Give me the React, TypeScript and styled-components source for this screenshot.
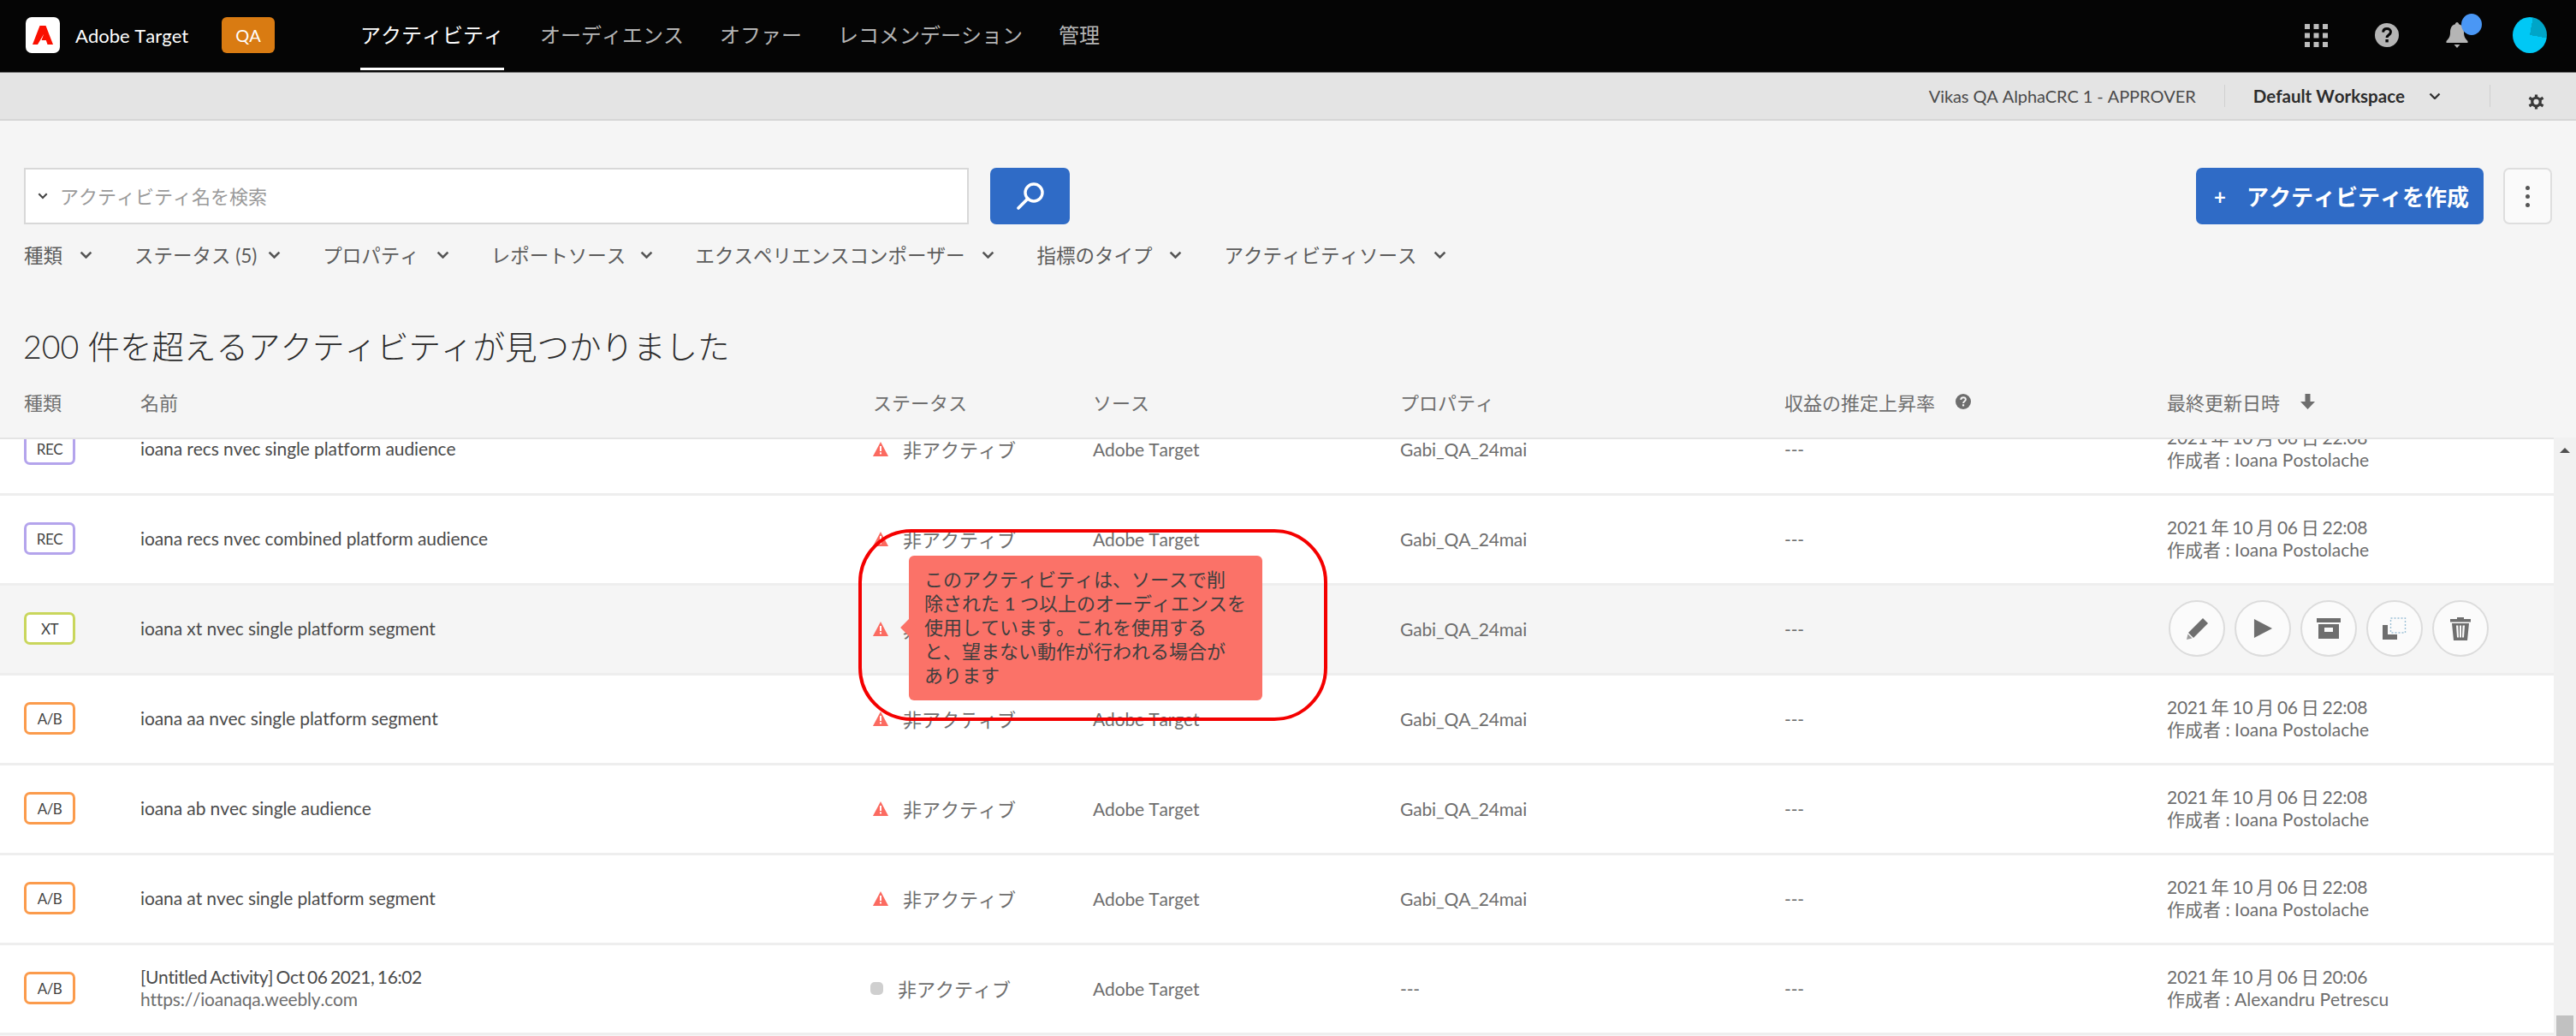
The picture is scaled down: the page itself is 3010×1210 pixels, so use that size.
import styled, { createGlobalStyle } from "styled-components";

// page basics
const GlobalStyle = createGlobalStyle`
  html, body {
    margin: 0;
    padding: 0;
    background: #f5f5f5;
  }
  body {
    font-family: Lato, "Noto Sans CJK JP", sans-serif;
    font-kerning: none;
    color: #4b4b4b;
  }
`;

const COLUMNS = "136px 856px 257px 359px 449px 447px 1fr";

const badgeColors: Record<string, string> = {
  REC: "#b4a4ec",
  XT: "#c9d65c",
  "A/B": "#fb9b4c",
};

type Activity = {
  type: string;
  name: string;
  url?: string;
  warning: boolean;
  property: string;
  updated: string;
  author: string;
  hovered?: boolean;
};

const activities: Activity[] = [
  { type: "REC", name: "ioana recs nvec single platform audience", warning: true, property: "Gabi_QA_24mai", updated: "2021 年 10 月 06 日 22:08", author: "Ioana Postolache" },
  { type: "REC", name: "ioana recs nvec combined platform audience", warning: true, property: "Gabi_QA_24mai", updated: "2021 年 10 月 06 日 22:08", author: "Ioana Postolache" },
  { type: "XT", name: "ioana xt nvec single platform segment", warning: true, property: "Gabi_QA_24mai", updated: "2021 年 10 月 06 日 22:08", author: "Ioana Postolache", hovered: true },
  { type: "A/B", name: "ioana aa nvec single platform segment", warning: true, property: "Gabi_QA_24mai", updated: "2021 年 10 月 06 日 22:08", author: "Ioana Postolache" },
  { type: "A/B", name: "ioana ab nvec single audience", warning: true, property: "Gabi_QA_24mai", updated: "2021 年 10 月 06 日 22:08", author: "Ioana Postolache" },
  { type: "A/B", name: "ioana at nvec single platform segment", warning: true, property: "Gabi_QA_24mai", updated: "2021 年 10 月 06 日 22:08", author: "Ioana Postolache" },
  { type: "A/B", name: "[Untitled Activity] Oct 06 2021, 16:02", url: "https://ioanaqa.weebly.com", warning: false, property: "---", updated: "2021 年 10 月 06 日 20:06", author: "Alexandru Petrescu" },
];

const navItems = ["アクティビティ", "オーディエンス", "オファー", "レコメンデーション", "管理"];

const filters = [
  { label: "種類", gap: 20 },
  { label: "ステータス (5)", gap: 13 },
  { label: "プロパティ", gap: 20 },
  { label: "レポートソース", gap: 17 },
  { label: "エクスペリエンスコンポーザー", gap: 20 },
  { label: "指標のタイプ", gap: 20 },
  { label: "アクティビティソース", gap: 20 },
];

// small drawings
function Chevron({ size = 14, color = "#555" }: { size?: number; color?: string }) {
  return (
    <svg width={size} height={size * 0.6} viewBox="0 0 14 8.4" fill="none">
      <path d="M1.5 1.5 7 7l5.5-5.5" stroke={color} strokeWidth="2.4" />
    </svg>
  );
}

function AdobeMark() {
  return (
    <svg width="24" height="24" viewBox="0 0 24 24">
      <path d="M8.5 1h7L24 23h-6.5l-1.7-5h-5.3l2.7-7.2L6 23H0z" fill="#fa0f00" />
    </svg>
  );
}

function GridIcon() {
  const dots = [0, 10.5, 21];
  return (
    <svg width="27" height="27" viewBox="0 0 27 27" fill="#bdbdbd">
      {dots.map((y) => dots.map((x) => <rect key={`${x}-${y}`} x={x} y={y} width="6" height="6" />))}
    </svg>
  );
}

function HelpIcon({ size, color, mark }: { size: number; color: string; mark: string }) {
  return (
    <svg width={size} height={size} viewBox="0 0 28 28">
      <circle cx="14" cy="14" r="14" fill={color} />
      <path d="M9.6 10.6c.2-2.7 2-4 4.5-4 2.6 0 4.4 1.500 4.400 3.700 0 3.500-4.400 3.300-4.400 6.700" fill="none" stroke={mark} strokeWidth="3" />
      <rect x="12.400" y="19" width="3.400" height="3.400" fill={mark} />
    </svg>
  );
}

function BellIcon() {
  return (
    <svg width="26" height="30" viewBox="0 0 26 30" fill="#b5b5b5">
      <path d="M13 0c1.300 0 2 1 2 2.200 4.500 1.200 6 5 6 9.800 0 5 2 7.500 4.500 10v2H.500v-2C3 19.500 5 17 5 12c0-4.800 1.500-8.600 6-9.800C11 1 11.700 0 13 0z" />
      <path d="M9.500 26h7L13 30z" />
    </svg>
  );
}

function GearIcon() {
  return (
    <svg width="19" height="20" viewBox="0 0 20 20" fill="none" stroke="#3a3a3a">
      <circle cx="10" cy="10" r="5" strokeWidth="3.400" />
      <path d="M10 1v4M10 15v4M1.500 5l3.500 2M15 13l3.500 2M1.500 15 5 13M15 7l3.500-2" strokeWidth="3.400" />
    </svg>
  );
}

function SearchIcon() {
  return (
    <svg width="34" height="34" viewBox="0 0 34 34" fill="none" stroke="#fff">
      <circle cx="21" cy="13" r="10" strokeWidth="3.400" />
      <path d="M14 20 3 31" strokeWidth="3.800" strokeLinecap="round" />
    </svg>
  );
}

function WarningIcon() {
  return (
    <svg width="18" height="17" viewBox="0 0 18 17">
      <path d="M9 0 18 17H0z" fill="#fb6a60" />
      <rect x="8" y="5" width="2" height="6" fill="#fff" />
      <rect x="8" y="12.400" width="2" height="2" fill="#fff" />
    </svg>
  );
}

function PencilIcon() {
  return (
    <svg width="27" height="27" viewBox="0 0 27 27" fill="#6e6e6e">
      <path d="M20 1l6 6L9 24l-6-6z" />
      <path d="M2.500 19.500l5 5L1 26z" fill="#9a9a9a" />
    </svg>
  );
}

function PlayIcon() {
  return (
    <svg width="22" height="22" viewBox="0 0 24 24" fill="#6e6e6e">
      <path d="M1 0 24 12 1 24z" />
    </svg>
  );
}

function ArchiveIcon() {
  return (
    <svg width="28" height="24" viewBox="0 0 28 24" fill="#6e6e6e">
      <rect width="28" height="5" />
      <path d="M2 7h24v17H2zM9 11v5h10v-5z" fillRule="evenodd" />
    </svg>
  );
}

function CopyIcon() {
  return (
    <svg width="28" height="26" viewBox="0 0 28 26" fill="none">
      <rect x="9.500" y="1" width="17" height="17" stroke="#9cc0d6" strokeWidth="1.400" strokeDasharray="2 2" />
      <path d="M0 9h6v11h11v6H0z" fill="#6e6e6e" />
    </svg>
  );
}

function TrashIcon() {
  return (
    <svg width="24" height="27" viewBox="0 0 24 27" fill="#6e6e6e">
      <path d="M8 0h8v2h8v3.500H0V2h8z" />
      <path d="M2 7h20l-2 20H4zM7 9.500l1 14h2l-.6-14zM11 9.500v14h2v-14zM14.600 9.500l-.6 14h2l1-14z" fillRule="evenodd" />
    </svg>
  );
}

function DownArrowIcon() {
  return (
    <svg width="17" height="18" viewBox="0 0 17 18" fill="#6e6e6e">
      <path d="M5.500 0h6v9H17l-8.500 9L0 9h5.500z" />
    </svg>
  );
}

export default function App() {
  return (
    <Page>
      <GlobalStyle />
      <TopBar>
        <LogoTile>
          <AdobeMark />
        </LogoTile>
        <BrandName>Adobe Target</BrandName>
        <EnvBadge>QA</EnvBadge>
        <NavList>
          {navItems.map((item, index) => (
            <NavItem key={item} $active={index === 0}>
              {item}
            </NavItem>
          ))}
        </NavList>
        <TopIcons>
          <GridIcon />
          <HelpIcon size={28} color="#b5b5b5" mark="#050505" />
          <BellWrap>
            <BellIcon />
            <BellDot />
          </BellWrap>
          <Avatar />
        </TopIcons>
      </TopBar>

      <SubBar>
        <AccountName>Vikas QA AlphaCRC 1 - APPROVER</AccountName>
        <SubDivider />
        <Workspace>
          Default Workspace
          <Chevron size={14} color="#333" />
        </Workspace>
        <SubDivider />
        <GearSlot>
          <GearIcon />
        </GearSlot>
      </SubBar>

      <Toolbar>
        <SearchGroup>
          <SearchBox>
            <Chevron size={12} color="#444" />
            <Placeholder>アクティビティ名を検索</Placeholder>
          </SearchBox>
          <SearchButton>
            <SearchIcon />
          </SearchButton>
        </SearchGroup>
        <CreateGroup>
          <CreateButton>
            <PlusSign>+</PlusSign>
            <CreateLabel>アクティビティを作成</CreateLabel>
          </CreateButton>
          <MoreButton>
            <MoreDot />
            <MoreDot />
            <MoreDot />
          </MoreButton>
        </CreateGroup>
      </Toolbar>

      <FilterRow>
        {filters.map((filter) => (
          <Filter key={filter.label} $gap={filter.gap}>
            {filter.label}
            <Chevron size={15} color="#555" />
          </Filter>
        ))}
      </FilterRow>

      <Heading>200 件を超えるアクティビティが見つかりました</Heading>

      <TableHead>
        <span>種類</span>
        <span>名前</span>
        <span>ステータス</span>
        <span>ソース</span>
        <span>プロパティ</span>
        <HeadWithIcon>
          収益の推定上昇率
          <HelpIcon size={18} color="#6e6e6e" mark="#f5f5f5" />
        </HeadWithIcon>
        <HeadWithIcon>
          最終更新日時
          <DownArrowIcon />
        </HeadWithIcon>
      </TableHead>

      <TableBody>
        <Viewport>
          <Rows>
            {activities.map((activity) => (
              <Row key={activity.name} $hovered={activity.hovered}>
                <div>
                  <TypeBadge $color={badgeColors[activity.type]}>{activity.type}</TypeBadge>
                </div>
                <NameCell>
                  <NameLine $tight={Boolean(activity.url)}>{activity.name}</NameLine>
                  {activity.url && <UrlLine>{activity.url}</UrlLine>}
                </NameCell>
                <StatusCell>
                  {activity.warning ? <WarningIcon /> : <StatusDot />}
                  <StatusText>非アクティブ</StatusText>
                  {activity.hovered && (
                    <Tooltip>
                      このアクティビティは、ソースで削
                      <br />
                      除された 1 つ以上のオーディエンスを
                      <br />
                      使用しています。これを使用する
                      <br />
                      と、望まない動作が行われる場合が
                      <br />
                      あります
                    </Tooltip>
                  )}
                </StatusCell>
                <PlainCell>Adobe Target</PlainCell>
                <PlainCell>{activity.property}</PlainCell>
                <PlainCell>---</PlainCell>
                {activity.hovered ? (
                  <ActionRow>
                    <ActionButton><PencilIcon /></ActionButton>
                    <ActionButton><PlayIcon /></ActionButton>
                    <ActionButton><ArchiveIcon /></ActionButton>
                    <ActionButton><CopyIcon /></ActionButton>
                    <ActionButton><TrashIcon /></ActionButton>
                  </ActionRow>
                ) : (
                  <DateCell>
                    <DateLine>{activity.updated}</DateLine>
                    <div>作成者 : {activity.author}</div>
                  </DateCell>
                )}
              </Row>
            ))}
          </Rows>
        </Viewport>
        <ScrollTrack>
          <ScrollArrow />
          <ScrollThumb />
        </ScrollTrack>
      </TableBody>

      <Annotation />
    </Page>
  );
}

const Page = styled.div`
  position: relative;
  display: flex;
  flex-direction: column;
  width: 3010px;
  height: 1210px;
  overflow: hidden;
  background: #f5f5f5;
`;

const TopBar = styled.header`
  display: flex;
  align-items: center;
  height: 85px;
  box-sizing: border-box;
  padding: 0 34px 2px 30px;
  background: #050505;
  border-bottom: 1px solid #6b6b6b;
`;

const LogoTile = styled.div`
  display: flex;
  align-items: center;
  justify-content: center;
  width: 40px;
  height: 42px;
  background: #fff;
  border-radius: 7px;
`;

const BrandName = styled.div`
  margin-left: 18px;
  width: 171px;
  color: #fff;
  font-size: 22px;
`;

const EnvBadge = styled.div`
  display: flex;
  align-items: center;
  justify-content: center;
  width: 62px;
  height: 42px;
  border-radius: 6px;
  background: #d97b12;
  color: #fff;
  font-size: 20px;
`;

const NavList = styled.nav`
  display: flex;
  align-self: stretch;
  gap: 42px;
  margin-left: 100px;
`;

const NavItem = styled.div<{ $active?: boolean }>`
  display: flex;
  align-items: center;
  font-size: 24px;
  color: ${(props) => (props.$active ? "#fff" : "#b5b5b5")};
  border-bottom: 3px solid ${(props) => (props.$active ? "#fff" : "transparent")};
`;

const TopIcons = styled.div`
  display: flex;
  align-items: center;
  margin-left: auto;
  gap: 55px;
`;

const BellWrap = styled.div`
  position: relative;
  display: flex;
`;

const BellDot = styled.span`
  position: absolute;
  top: -10px;
  left: 18px;
  width: 24px;
  height: 25px;
  border-radius: 50%;
  background: #4a97f5;
`;

const Avatar = styled.div`
  width: 40px;
  height: 42px;
  margin-left: -3px;
  border-radius: 50%;
  background: conic-gradient(from 10deg, #00a5c8 0 90deg, #00c8f5 90deg 360deg);
`;

const SubBar = styled.div`
  display: flex;
  align-items: center;
  justify-content: flex-end;
  height: 56px;
  box-sizing: border-box;
  padding-right: 37px;
  background: #e4e4e4;
  border-bottom: 2px solid #d6d6d6;
`;

const AccountName = styled.div`
  font-size: 20px;
  letter-spacing: -0.1px;
  color: #4b4b4b;
`;

const SubDivider = styled.span`
  width: 1px;
  height: 26px;
  margin: 0 33px;
  background: #d0d0d0;
`;

const Workspace = styled.div`
  display: flex;
  align-items: center;
  gap: 28px;
  padding-right: 24px;
  font-size: 20.5px;
  font-weight: 700;
  color: #2c2c2c;
`;

const GearSlot = styled.div`
  display: flex;
  margin-left: 11px;
  padding-top: 13px;
`;

const Toolbar = styled.div`
  display: flex;
  justify-content: space-between;
  padding: 55px 28px 0;
`;

const SearchGroup = styled.div`
  display: flex;
  gap: 25px;
`;

const SearchBox = styled.div`
  display: flex;
  align-items: center;
  gap: 14px;
  width: 1104px;
  height: 66px;
  box-sizing: border-box;
  padding-left: 14px;
  background: #fff;
  border: 2px solid #d8d8d8;
`;

const Placeholder = styled.span`
  position: relative;
  top: -1px;
  font-size: 22px;
  color: #9a9a9a;
`;

const SearchButton = styled.div`
  display: flex;
  align-items: center;
  justify-content: center;
  width: 93px;
  height: 66px;
  border-radius: 7px;
  background: #2f6bc6;
`;

const CreateGroup = styled.div`
  display: flex;
  gap: 23px;
`;

const CreateButton = styled.div`
  display: flex;
  align-items: center;
  width: 336px;
  height: 66px;
  box-sizing: border-box;
  padding-left: 21px;
  border-radius: 7px;
  background: #2f6bc6;
  color: #fff;
  font-size: 26px;
  font-weight: 700;
`;

const CreateLabel = styled.span`
  position: relative;
  top: -1px;
`;

const PlusSign = styled.span`
  width: 38px;
  font-size: 24px;
`;

const MoreButton = styled.div`
  display: flex;
  flex-direction: column;
  align-items: center;
  justify-content: center;
  gap: 5px;
  width: 57px;
  height: 66px;
  box-sizing: border-box;
  background: #fafafa;
  border: 2px solid #dedede;
  border-radius: 7px;
`;

const MoreDot = styled.span`
  width: 5px;
  height: 5px;
  background: #555;
  border-radius: 50%;
`;

const FilterRow = styled.div`
  display: flex;
  gap: 49px;
  height: 30px;
  margin-top: 20px;
  padding-left: 28px;
`;

const Filter = styled.div<{ $gap: number }>`
  display: flex;
  align-items: center;
  gap: ${(props) => props.$gap}px;
  font-size: 22.5px;
  color: #5c5c5c;
`;

const Heading = styled.h1`
  margin: 68px 0 0;
  padding-left: 27px;
  height: 50px;
  line-height: 50px;
  font-size: 37.5px;
  font-weight: 300;
  color: #2c2c2c;
`;

const TableHead = styled.div`
  display: grid;
  grid-template-columns: ${COLUMNS};
  align-items: center;
  height: 81px;
  box-sizing: border-box;
  padding: 0 0 3px 28px;
  font-size: 22px;
  color: #6e6e6e;
`;

const HeadWithIcon = styled.span`
  display: flex;
  align-items: center;
  gap: 24px;
`;

const TableBody = styled.div`
  display: flex;
  flex: 1;
  min-height: 0;
`;

const Viewport = styled.div`
  flex: 1;
  overflow: hidden;
  border-top: 2px solid #e4e4e4;
`;

// list is scrolled down a little in the screenshot
const Rows = styled.div`
  margin-top: -39px;
`;

const Row = styled.div<{ $hovered?: boolean }>`
  display: grid;
  grid-template-columns: ${COLUMNS};
  align-items: center;
  height: 105px;
  box-sizing: border-box;
  padding: 0 0 2px 28px;
  background: ${(props) => (props.$hovered ? "#f5f5f5" : "#fff")};
  border-bottom: 3px solid #eeeeee;
`;

const TypeBadge = styled.div<{ $color: string }>`
  display: flex;
  align-items: center;
  justify-content: center;
  width: 60px;
  height: 38px;
  box-sizing: border-box;
  background: #fff;
  border: 3px solid ${(props) => props.$color};
  border-radius: 7px;
  font-size: 17px;
  letter-spacing: -0.5px;
  color: #444;
`;

const NameCell = styled.div`
  font-size: 21px;
  line-height: 26px;
  letter-spacing: -0.1px;
  color: #4b4b4b;
`;

const NameLine = styled.div<{ $tight: boolean }>`
  letter-spacing: ${(props) => (props.$tight ? "-0.4px" : "inherit")};
  word-spacing: ${(props) => (props.$tight ? "-1.6px" : "0")};
`;

const UrlLine = styled.div`
  letter-spacing: -0.2px;
  color: #6e6e6e;
`;

const StatusCell = styled.div`
  position: relative;
  display: flex;
  align-items: center;
  align-self: stretch;
`;

const StatusText = styled.span`
  margin-left: 17px;
  font-size: 22px;
  color: #6e6e6e;
`;

const StatusDot = styled.span`
  width: 15px;
  height: 15px;
  margin-left: -3px;
  border-radius: 5px;
  background: #cfcfcf;
`;

const Tooltip = styled.div`
  position: absolute;
  z-index: 2;
  left: 42px;
  top: -35px;
  width: 413px;
  height: 169px;
  box-sizing: border-box;
  padding: 14px 18px;
  border-radius: 6px;
  background: #fb7268;
  color: #3f3f3f;
  font-size: 22px;
  line-height: 28px;
  white-space: nowrap;

  &::before {
    content: "";
    position: absolute;
    left: -7px;
    top: 77px;
    width: 14px;
    height: 14px;
    background: #fb7268;
    transform: rotate(45deg);
  }
`;

const PlainCell = styled.div`
  font-size: 21px;
  letter-spacing: -0.15px;
  color: #6e6e6e;
`;

const DateCell = styled.div`
  font-size: 21px;
  line-height: 26px;
  color: #6e6e6e;
`;

const DateLine = styled.div`
  letter-spacing: -0.3px;
  word-spacing: -1px;
`;

const ActionRow = styled.div`
  display: flex;
  gap: 11px;
  margin-left: 2px;
`;

const ActionButton = styled.div`
  display: flex;
  align-items: center;
  justify-content: center;
  width: 66px;
  height: 66px;
  box-sizing: border-box;
  border: 2px solid #dcdcdc;
  border-radius: 50%;
  background: #fbfbfb;
`;

const ScrollTrack = styled.div`
  display: flex;
  flex-direction: column;
  justify-content: space-between;
  align-items: center;
  width: 26px;
  padding-top: 12px;
  box-sizing: border-box;
  background: #f1f1f1;
`;

const ScrollArrow = styled.span`
  width: 0;
  height: 0;
  border-left: 6px solid transparent;
  border-right: 6px solid transparent;
  border-bottom: 6px solid #505050;
`;

const ScrollThumb = styled.span`
  width: 20px;
  height: 24px;
  background: #c1c1c1;
`;

// red ring someone drew on the screenshot
const Annotation = styled.div`
  position: absolute;
  z-index: 3;
  left: 1003px;
  top: 618px;
  width: 548px;
  height: 224px;
  box-sizing: border-box;
  border: 4px solid #f40000;
  border-radius: 62px;
  pointer-events: none;
`;
